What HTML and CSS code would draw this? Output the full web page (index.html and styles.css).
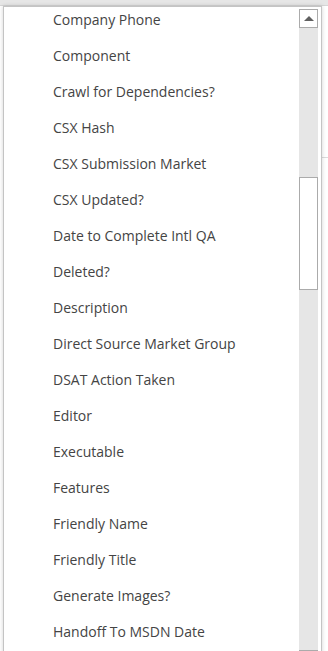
FILE: index.html
```html
<!DOCTYPE html>
<html lang="en">
<head>
    <meta charset="UTF-8">
    <title>Field picker</title>
    <link rel="stylesheet" href="styles.css">
</head>
<body>
    <!-- page behind the dropdown -->
    <div class="page">
        <div class="top-bar"></div>
        <div class="side-rule"></div>
    </div>

    <!-- open dropdown -->
    <div class="dropdown">
        <ul class="options">
            <li>Company Phone</li>
            <li>Component</li>
            <li>Crawl for Dependencies?</li>
            <li>CSX Hash</li>
            <li>CSX Submission Market</li>
            <li>CSX Updated?</li>
            <li>Date to Complete Intl QA</li>
            <li>Deleted?</li>
            <li>Description</li>
            <li>Direct Source Market Group</li>
            <li>DSAT Action Taken</li>
            <li>Editor</li>
            <li>Executable</li>
            <li>Features</li>
            <li>Friendly Name</li>
            <li>Friendly Title</li>
            <li>Generate Images?</li>
            <li>Handoff To MSDN Date</li>
        </ul>
        <div class="scrollbar">
            <div class="scroll-btn up"><span class="arrow-up"></span></div>
            <div class="track">
                <div class="thumb"></div>
            </div>
            <div class="scroll-btn down"><span class="arrow-down"></span></div>
        </div>
    </div>
</body>
</html>
```

FILE: styles.css
```css
/* page */
html, body {
    margin: 0;
    height: 100%;
    overflow: hidden;
}

body {
    background: #fff;
    font-family: 'Open Sans', 'Noto Sans', sans-serif;
    position: relative;
}

.page {
    height: 100%;
    background: #fff;
}

.top-bar {
    height: 6px;
    background: #e6e6e6;
    border-bottom: 1px solid #d6d6d6;
    box-sizing: border-box;
}

.side-rule {
    margin: 151px 0 0 322px;
    border-top: 1px solid #dcdcdc;
}

/* dropdown panel */
.dropdown {
    position: absolute;
    left: 3px;
    top: 6px;
    width: 319px;
    height: 680px;
    box-sizing: border-box;
    background: #fff;
    border: 1px solid #c4c4c4;
    box-shadow: 0 0 4px rgba(0,0,0,0.18);
    display: flex;
    overflow: hidden;
}

.options {
    list-style: none;
    margin: -5px 0 0 0;
    padding: 0;
    flex: 1;
}

.options li {
    height: 36px;
    line-height: 36px;
    padding-left: 49px;
    font-size: 14px;
    color: #444;
    white-space: nowrap;
}

/* scrollbar */
.scrollbar {
    width: 19px;
    margin: 2px 3px 0 0;
    display: flex;
    flex-direction: column;
    background: #e6e6e6;
    height: 660px;
}

.scroll-btn {
    height: 19px;
    box-sizing: border-box;
    border: 1px solid #ababab;
    background: #fff;
    display: flex;
    align-items: center;
    justify-content: center;
}

.arrow-up {
    width: 0;
    height: 0;
    border-left: 5px solid transparent;
    border-right: 5px solid transparent;
    border-bottom: 5px solid #606060;
}

.arrow-down {
    width: 0;
    height: 0;
    border-left: 5px solid transparent;
    border-right: 5px solid transparent;
    border-top: 5px solid #606060;
}

.track {
    flex: 1;
    padding-top: 149px;
}

.thumb {
    height: 113px;
    box-sizing: border-box;
    border: 1px solid #ababab;
    background: #fff;
}
```
